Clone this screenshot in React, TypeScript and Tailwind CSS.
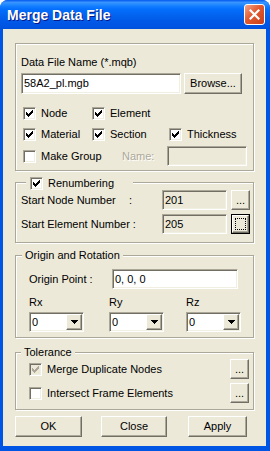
import React from "react";

const raised =
  "border border-t-white border-l-white border-b-[#716F64] border-r-[#716F64] shadow-[inset_-1px_-1px_0_#ACA899] bg-[#ECE9D8]";
const sunken =
  "border border-t-[#ACA899] border-l-[#ACA899] border-b-white border-r-white shadow-[inset_1px_1px_0_#716F64,inset_-1px_-1px_0_#F1EFE2]";

function Check({ checked, disabled }: { checked?: boolean; disabled?: boolean }) {
  return (
    <span
      className={`flex w-[13px] h-[13px] shrink-0 items-center justify-center ${sunken} ${
        disabled ? "bg-[#ECE9D8]" : "bg-white"
      }`}
    >
      {checked && (
        <svg width="7" height="7" viewBox="0 0 7 7" shapeRendering="crispEdges">
          <polygon
            points="0,2 2,4 7,-1 7,2 2,7 0,5"
            fill={disabled ? "#ACA899" : "#000"}
          />
        </svg>
      )}
    </span>
  );
}

function Btn({
  children,
  className = "",
  focus,
}: {
  children: React.ReactNode;
  className?: string;
  focus?: boolean;
}) {
  if (focus) {
    return (
      <div className={`flex border border-black ${className}`}>
        <div className={`flex-1 flex items-center justify-center ${raised}`}>
          <div className="w-[11px] h-[12px] border border-dotted border-black" />
        </div>
      </div>
    );
  }
  return (
    <div className={`flex items-center justify-center ${raised} ${className}`}>
      {children}
    </div>
  );
}

function Field({
  children,
  className = "",
  disabled,
}: {
  children?: React.ReactNode;
  className?: string;
  disabled?: boolean;
}) {
  return (
    <div
      className={`flex items-center pl-[2px] ${sunken} ${
        disabled ? "bg-[#ECE9D8]" : "bg-white"
      } ${className}`}
    >
      {children}
    </div>
  );
}

function Combo({ value }: { value: string }) {
  return (
    <div className={`flex w-[55px] h-[20px] p-[1px] bg-white ${sunken}`}>
      <span className="flex-1 pl-[1px] leading-[16px]">{value}</span>
      <div className={`w-[16px] flex items-center justify-center ${raised}`}>
        <svg width="7" height="4" viewBox="0 0 7 4" shapeRendering="crispEdges">
          <polygon points="0,0 7,0 3.5,4" fill="#000" />
        </svg>
      </div>
    </div>
  );
}

function Group({
  legend,
  className = "",
  children,
}: {
  legend?: React.ReactNode;
  className?: string;
  children: React.ReactNode;
}) {
  return (
    <div
      className={`relative w-[239px] flex flex-col border border-[#ACA899] shadow-[1px_1px_0_#fff,inset_1px_1px_0_#fff] ${className}`}
    >
      {legend}
      {children}
    </div>
  );
}

function Item({ w, label, checked }: { w: string; label: string; checked?: boolean }) {
  return (
    <div className={`flex items-center gap-[5px] ${w}`}>
      <Check checked={checked} />
      <span className="whitespace-nowrap">{label}</span>
    </div>
  );
}

export default function App() {
  return (
    <div className="w-[270px] h-[451px] flex flex-col bg-[#0055E5] rounded-t-[8px] overflow-hidden font-['Liberation_Sans',Arial,sans-serif] text-[11px] leading-[13px] text-black">
      {/* title bar */}
      <div className="h-[29px] shrink-0 flex items-center pl-[7px] pr-[5px] pt-[1px] bg-[linear-gradient(to_bottom,#0058EE_0%,#3A93FF_8%,#288EFF_14%,#127DFF_22%,#036FFC_32%,#0262EE_55%,#0057E5_78%,#0054E3_92%,#0050D8_100%)]">
        <span className="text-white font-bold text-[14px] leading-[16px] [text-shadow:1px_1px_0_#0A1883]">
          Merge Data File
        </span>
        <div className="ml-auto w-[21px] h-[21px] mb-[1px] flex items-center justify-center rounded-[3px] border border-white bg-[linear-gradient(135deg,#F3A58A_0%,#E2592F_45%,#C8401A_100%)]">
          <svg width="11" height="11" viewBox="0 0 11 11">
            <path d="M1.5 1.5 L9.5 9.5 M9.5 1.5 L1.5 9.5" stroke="#fff" strokeWidth="2.2" strokeLinecap="square" />
          </svg>
        </div>
      </div>

      {/* body */}
      <div className="flex-1 ml-[3px] mr-[4px] mb-[5px] bg-[#ECE9D8] flex flex-col pl-[12px]">
        {/* data file */}
        <Group className="mt-[14px] h-[128px] pl-[5px]">
          <div className="mt-[12px] h-[13px]">Data File Name (*.mqb)</div>
          <div className="mt-[4px] flex gap-[3px]">
            <Field className="w-[160px] h-[21px]">58A2_pl.mgb</Field>
            <Btn className="w-[58px] h-[21px]">Browse...</Btn>
          </div>
          <div className="mt-[11px] h-[16px] flex items-center pl-[2px]">
            <Item w="w-[69px]" label="Node" checked />
            <Item w="w-[77px]" label="Element" checked />
          </div>
          <div className="mt-[5px] h-[16px] flex items-center pl-[2px]">
            <Item w="w-[69px]" label="Material" checked />
            <Item w="w-[77px]" label="Section" checked />
            <Item w="" label="Thickness" checked />
          </div>
          <div className="mt-[4px] h-[20px] flex items-center pl-[2px]">
            <Item w="w-[99px]" label="Make Group" />
            <span className="w-[45px] text-[#ACA899] [text-shadow:1px_1px_0_#fff]">Name:</span>
            <Field disabled className="w-[80px] h-[20px]" />
          </div>
        </Group>

        {/* renumbering */}
        <Group
          className="mt-[11px] h-[61px] pl-[5px]"
          legend={
            <div className="absolute left-[10px] -top-[6px] w-[107px] h-[13px] flex items-center gap-[5px] pl-[4px] bg-[#ECE9D8]">
              <Check checked />
              <span>Renumbering</span>
            </div>
          }
        >
          <div className="mt-[7px] h-[20px] flex items-center">
            <div className="w-[141px] flex">
              <span className="w-[108px]">Start Node Number</span>
              <span>:</span>
            </div>
            <Field disabled className="w-[65px] h-[20px]">201</Field>
            <Btn className="ml-[4px] w-[19px] h-[20px]">...</Btn>
          </div>
          <div className="mt-[4px] h-[20px] flex items-center">
            <span className="w-[141px]">Start Element Number :</span>
            <Field disabled className="w-[65px] h-[20px]">205</Field>
            <Btn focus className="ml-[4px] w-[19px] h-[20px]">...</Btn>
          </div>
        </Group>

        {/* origin */}
        <Group
          className="mt-[12px] h-[83px] pl-[13px]"
          legend={
            <div className="absolute left-[6px] -top-[7px] h-[13px] px-[3px] bg-[#ECE9D8]">
              Origin and Rotation
            </div>
          }
        >
          <div className="mt-[13px] h-[20px] flex items-center">
            <span className="w-[83px]">Origin Point :</span>
            <Field className="w-[126px] h-[20px]">0, 0, 0</Field>
          </div>
          <div className="mt-[7px] h-[13px] flex">
            <span className="w-[80px]">Rx</span>
            <span className="w-[77px]">Ry</span>
            <span>Rz</span>
          </div>
          <div className="mt-[3px] flex">
            <div className="w-[80px]">
              <Combo value="0" />
            </div>
            <div className="w-[77px]">
              <Combo value="0" />
            </div>
            <Combo value="0" />
          </div>
        </Group>

        {/* tolerance */}
        <Group
          className="mt-[14px] h-[58px] pl-[13px] pr-[4px]"
          legend={
            <div className="absolute left-[5px] -top-[7px] h-[13px] px-[3px] bg-[#ECE9D8]">
              Tolerance
            </div>
          }
        >
          <div className="mt-[6px] h-[20px] flex items-center gap-[5px]">
            <Check checked disabled />
            <span>Merge Duplicate Nodes</span>
            <Btn className="ml-auto w-[19px] h-[20px]">...</Btn>
          </div>
          <div className="mt-[4px] h-[20px] flex items-center gap-[5px]">
            <Check />
            <span>Intersect Frame Elements</span>
            <Btn className="ml-auto w-[19px] h-[20px]">...</Btn>
          </div>
        </Group>

        {/* buttons */}
        <div className="mt-[6px] h-[21px] flex">
          <Btn className="w-[67px] h-[21px]">OK</Btn>
          <Btn className="ml-[19px] w-[66px] h-[21px]">Close</Btn>
          <Btn className="ml-[21px] w-[59px] h-[21px]">Apply</Btn>
        </div>
      </div>
    </div>
  );
}
